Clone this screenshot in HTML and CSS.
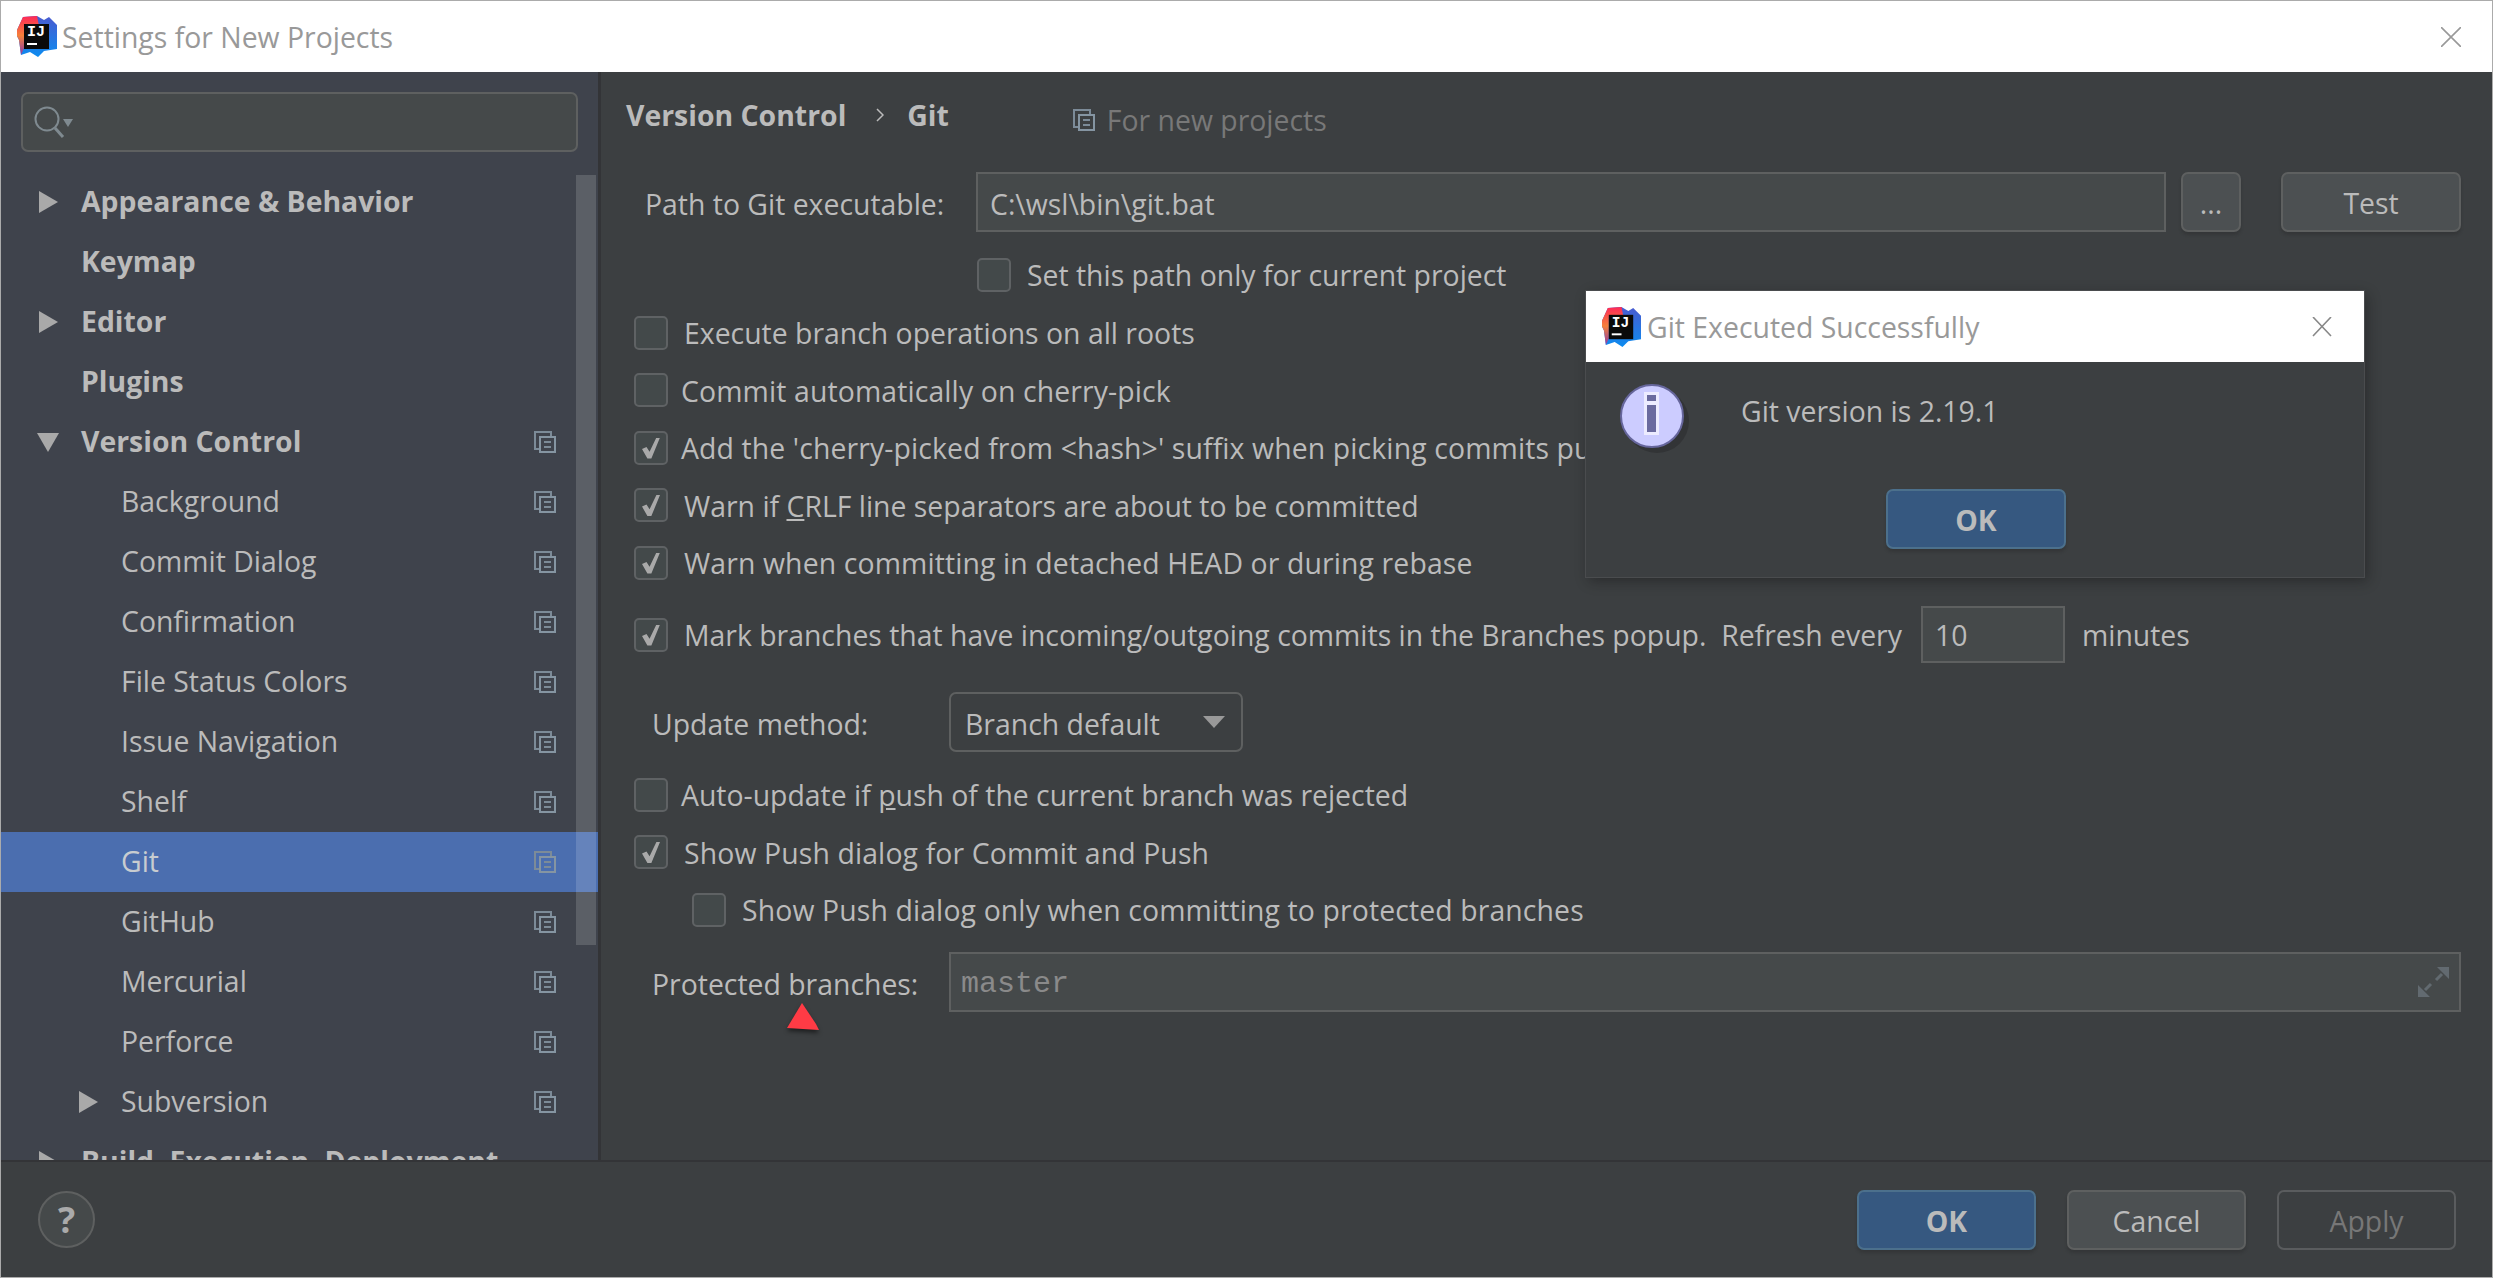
FILE: index.html
```html
<!DOCTYPE html>
<html lang="en">
<head>
<meta charset="utf-8">
<title>Settings for New Projects</title>
<link rel="stylesheet" href="styles.css">
</head>
<body>
<svg class="defs" width="0" height="0" aria-hidden="true">
  <defs>
    <linearGradient id="g-blue" x1="0" y1="0" x2="0" y2="1"><stop offset="0" stop-color="#4a5bd0"/><stop offset="1" stop-color="#0c8cf0"/></linearGradient>
    <linearGradient id="g-left" x1="0" y1="0" x2="0" y2="1"><stop offset="0" stop-color="#fe2857"/><stop offset=".5" stop-color="#f5803a"/><stop offset="1" stop-color="#8a3aa8"/></linearGradient>
    <symbol id="logo" viewBox="0 0 40 41">
      <path d="M0 14 6 1 20 0 27 4 32 1 40 9 40 33 27 35 21 41 13 36 4 39 2 24 0 20Z" fill="url(#g-blue)"/>
      <path d="M0 14 6 1 20 0 22 10 7 10 7 32 4 39 2 24 0 20Z" fill="url(#g-left)"/>
      <rect x="7" y="8" width="25" height="25" fill="#0a0a0a"/>
      <text x="10" y="20" class="logo-text">IJ</text>
      <rect x="10" y="27" width="10" height="2" fill="#fff"/>
    </symbol>
    <symbol id="copy" viewBox="0 0 22 22">
      <path d="M1 1H17V6H6V18H1Z" fill="none" stroke="#7c8b98" stroke-width="2"/>
      <rect x="6" y="6" width="15" height="15" fill="none" stroke="#8595a2" stroke-width="2"/>
      <path d="M10 11H17M10 16H17" stroke="#7c8b98" stroke-width="2"/>
    </symbol>
  </defs>
</svg>

<div class="window">
  <header class="titlebar">
    <svg class="logo"><use href="#logo"/></svg>
    <span class="title-text">Settings for New Projects</span>
    <svg class="close" viewBox="0 0 20 20"><path d="M0 0 20 20M20 0 0 20"/></svg>
  </header>

  <div class="content">
    <aside class="sidebar">
      <div class="search">
        <svg class="search-icon" viewBox="0 0 40 34">
          <circle cx="13" cy="14" r="11.500" fill="none" stroke="#7f8a90" stroke-width="2"/>
          <path d="M21 23 29 32" stroke="#7f8a90" stroke-width="3"/>
          <path d="M29 14H39L34 22Z" fill="#7f8a90"/>
        </svg>
      </div>
      <div class="tree-wrap">
        <ul class="tree">
          <li class="node top"><i class="arrow right"></i><span>Appearance &amp; Behavior</span></li>
          <li class="node top"><span>Keymap</span></li>
          <li class="node top"><i class="arrow right"></i><span>Editor</span></li>
          <li class="node top"><span>Plugins</span></li>
          <li class="node top"><i class="arrow down"></i><span>Version Control</span><svg class="copy"><use href="#copy"/></svg></li>
          <li class="node sub"><span>Background</span><svg class="copy"><use href="#copy"/></svg></li>
          <li class="node sub"><span>Commit Dialog</span><svg class="copy"><use href="#copy"/></svg></li>
          <li class="node sub"><span>Confirmation</span><svg class="copy"><use href="#copy"/></svg></li>
          <li class="node sub"><span>File Status Colors</span><svg class="copy"><use href="#copy"/></svg></li>
          <li class="node sub"><span>Issue Navigation</span><svg class="copy"><use href="#copy"/></svg></li>
          <li class="node sub"><span>Shelf</span><svg class="copy"><use href="#copy"/></svg></li>
          <li class="node sub selected"><span>Git</span><svg class="copy"><use href="#copy"/></svg></li>
          <li class="node sub"><span>GitHub</span><svg class="copy"><use href="#copy"/></svg></li>
          <li class="node sub"><span>Mercurial</span><svg class="copy"><use href="#copy"/></svg></li>
          <li class="node sub"><span>Perforce</span><svg class="copy"><use href="#copy"/></svg></li>
          <li class="node sub"><i class="arrow right"></i><span>Subversion</span><svg class="copy"><use href="#copy"/></svg></li>
          <li class="node top"><i class="arrow right"></i><span>Build, Execution, Deployment</span></li>
        </ul>
        <div class="scrollbar"></div>
      </div>
    </aside>

    <main class="main">
      <div class="crumbs">
        <b>Version Control</b>
        <svg class="chevron" viewBox="0 0 8 14"><path d="M1 1 7 7 1 13"/></svg>
        <b>Git</b>
        <svg class="copy crumb-copy"><use href="#copy"/></svg>
        <span class="for-new">For new projects</span>
      </div>

      <div class="path-row">
        <label class="path-label">Path to Git executable:</label>
        <div class="field path-field">C:\wsl\bin\git.bat</div>
        <button class="btn dots">...</button>
        <button class="btn test">Test</button>
      </div>

      <div class="check set-path"><i class="box"></i><span>Set this path only for current project</span></div>

      <div class="check first"><i class="box"></i><span>Execute branch operations on all roots</span></div>
      <div class="check narrow loose"><i class="box"></i><span>Commit automatically on cherry-pick</span></div>
      <div class="check narrow loose"><i class="box on"></i><span>Add the 'cherry-picked from &lt;hash&gt;' suffix when picking commits pushed to protected branches</span></div>
      <div class="check"><i class="box on"></i><span>Warn if <u>C</u>RLF line separators are about to be committed</span></div>
      <div class="check loose"><i class="box on"></i><span>Warn when committing in detached HEAD or during rebase</span></div>

      <div class="check mark-row"><i class="box on"></i><span>Mark branches that have incoming/outgoing commits in the Branches popup.&nbsp; Refresh every</span><div class="field refresh">10</div><span>minutes</span></div>

      <div class="update-row">
        <label class="form-label">Update method:</label>
        <div class="combo"><span>Branch default</span><i class="combo-arrow"></i></div>
      </div>

      <div class="check narrow auto"><i class="box"></i><span>Auto-update if <u>p</u>ush of the current branch was rejected</span></div>
      <div class="check loose"><i class="box on"></i><span>Show Push dialog for Commit and Push</span></div>
      <div class="check indented loose"><i class="box"></i><span>Show Push dialog only when committing to protected branches</span></div>

      <div class="protected-row">
        <label class="form-label">Protected branches:</label>
        <div class="field protected">
          <span class="mono">master</span>
          <svg class="expand" viewBox="0 0 31 30"><path d="M19 0H31V12Z M0 30V18L12 30Z" fill="#626a70"/><path d="M24 7 18 13M7 23 13 17" stroke="#626a70" stroke-width="3"/></svg>
        </div>
      </div>
    </main>
  </div>

  <footer class="footer">
    <button class="help">?</button>
    <div class="actions">
      <button class="btn primary">OK</button>
      <button class="btn">Cancel</button>
      <button class="btn ghost">Apply</button>
    </div>
  </footer>
</div>

<svg class="cursor" viewBox="0 0 34 30"><path d="M16 1 1 26 33 28 30 22 Z"/></svg>

<section class="dialog">
  <header class="dialog-title">
    <svg class="dialog-logo"><use href="#logo"/></svg>
    <span class="dialog-title-text">Git Executed Successfully</span>
    <svg class="dialog-close" viewBox="0 0 20 20"><path d="M1 0 19 19M19 0 1 19"/></svg>
  </header>
  <div class="dialog-body">
    <svg class="info" viewBox="0 0 70 70">
      <circle cx="35" cy="35" r="32" fill="#1f2022" opacity=".35" transform="translate(3 3)"/>
      <circle cx="33" cy="33" r="31" fill="#ccccff" stroke="#66669c" stroke-width="2"/>
      <rect x="25" y="9" width="15" height="43" fill="#ecebff"/>
      <rect x="28" y="12" width="9" height="6" fill="#6a6a9f"/>
      <rect x="28" y="22" width="9" height="27" fill="#6a6a9f"/>
    </svg>
    <p class="dialog-msg">Git version is 2.19.1</p>
  </div>
  <div class="dialog-actions"><button class="btn primary">OK</button></div>
</section>
</body>
</html>
```

FILE: styles.css
```css
* { box-sizing: border-box; }
html, body { margin: 0; height: 100%; overflow: hidden; }
body {
  position: relative;
  font-family: "Open Sans", "Noto Sans", sans-serif;
  font-size: 28.4px;
  color: #bbbbbb;
  background: #3c3f41;
}
.defs { position: absolute; }
.logo-text { font: 700 15px "Liberation Mono", monospace; fill: #fff; }

.window {
  height: 1278px;
  display: flex;
  flex-direction: column;
  border: 1px solid #ababab;
}

.titlebar {
  height: 71px;
  flex: none;
  background: #fff;
  display: flex;
  align-items: center;
  padding-left: 16px;
}
.logo { width: 40px; height: 41px; margin-right: 5px; }
.title-text { color: #999; line-height: 1; padding-top: 2px; }
.close { width: 20px; height: 20px; margin-left: auto; margin-right: 31px; fill: none; stroke: #999; stroke-width: 1.6; }

.content { height: 1088px; flex: none; display: flex; }

.sidebar {
  width: 600px;
  flex: none;
  background: #3f434c;
  border-right: 3px solid #333437;
  display: flex;
  flex-direction: column;
  padding-top: 20px;
  overflow: hidden;
}
.search {
  width: 557px;
  height: 60px;
  flex: none;
  margin-left: 20px;
  background: #45494a;
  border: 2px solid #5e6060;
  border-radius: 7px;
  display: flex;
  align-items: center;
  padding-left: 11px;
}
.search-icon { width: 40px; height: 34px; }

.tree-wrap { flex: 1; min-height: 0; margin-top: 20px; position: relative; overflow: hidden; }
.tree { list-style: none; margin: 0; padding: 0; }
.node {
  height: 60px;
  position: relative;
  display: flex;
  align-items: center;
  white-space: nowrap;
}
.node span { padding-bottom: 2px; }
.node.top { padding-left: 80px; font-weight: 700; }
.node.sub { padding-left: 120px; }
.node.selected { background: #4b6eaf; color: #c8ccd0; }
.scrollbar {
  position: absolute;
  left: 575px;
  top: 3px;
  width: 20px;
  height: 770px;
  background: rgba(255, 255, 255, .15);
}
.arrow { position: absolute; width: 0; height: 0; }
.arrow.right {
  left: 38px;
  border-top: 11px solid transparent;
  border-bottom: 11px solid transparent;
  border-left: 19px solid #a9a9a9;
}
.node.sub .arrow.right { left: 78px; }
.arrow.down {
  left: 36px;
  border-left: 11px solid transparent;
  border-right: 11px solid transparent;
  border-top: 19px solid #a9a9a9;
}
.copy { width: 22px; height: 22px; flex: none; }
.node .copy { position: absolute; left: 533px; top: 19px; }

.main { flex: 1; min-width: 0; padding-left: 33px; position: relative; }

.crumbs { height: 44px; margin: 21px 0 0 -8px; display: flex; align-items: center; white-space: nowrap; }
.crumbs b { font-weight: 700; }
.chevron { width: 8px; height: 14px; margin: 0 23px 0 30px; fill: none; stroke: #bbb; stroke-width: 1.5; }
.crumb-copy { margin-left: 124px; margin-top: 10px; }
.for-new { color: #787878; margin-left: 12px; margin-top: 10px; }

.path-row { display: flex; align-items: center; margin-top: 35px; height: 60px; padding-left: 11px; }
.path-label { width: 331px; flex: none; white-space: nowrap; padding-top: 3px; }
.field {
  background: #45494a;
  border: 2px solid #5e6060;
  display: flex;
  align-items: center;
  height: 60px;
}
.path-field { width: 1190px; padding: 3px 0 0 12px; }

.btn {
  width: 180px;
  height: 60px;
  font: inherit;
  color: #bbb;
  background: #4c5052;
  border: 2px solid #5e6060;
  border-radius: 7px;
  box-shadow: 0 3px 3px rgba(30, 30, 30, .25);
  padding: 2px 0 0;
}
.dots { width: 60px; margin-left: 15px; }
.test { margin-left: 40px; }
.btn.primary { background: #365880; border-color: #4c708c; font-weight: 700; }
.btn.ghost { background: transparent; color: #777; border-color: #5a5c5e; box-shadow: none; }

.check {
  display: flex;
  align-items: center;
  gap: 16px;
  height: 35px;
  margin-top: 22.5px;
  white-space: nowrap;
}
.check > span { padding-top: 1px; }
.check.narrow { gap: 13px; }
.check.loose { letter-spacing: .12px; }
.box {
  width: 34px;
  height: 34px;
  flex: none;
  border: 2px solid #5f6264;
  border-radius: 5px;
  background: #43494a;
  position: relative;
  display: block;
}
.box.on::after {
  content: "";
  position: absolute;
  left: 6px;
  top: 5px;
  width: 18px;
  height: 21px;
  background: #a9a9a9;
  clip-path: polygon(0 55%, 25% 45%, 42% 68%, 80% 0, 100% 0, 52% 100%, 30% 100%);
}
.set-path { margin-top: 25px; margin-left: 343px; }
.first { margin-top: 23px; }
.mark-row { height: 57px; margin-top: 26px; }
.refresh { width: 144px; height: 57px; padding-left: 12px; margin: 0 1px 0 3px; background: #45494a; }
.update-row { display: flex; align-items: center; height: 60px; margin-top: 29px; padding-left: 18px; }
.form-label { width: 297px; flex: none; white-space: nowrap; padding-top: 3px; }
.combo {
  width: 294px;
  height: 60px;
  border: 2px solid #5e6060;
  border-radius: 7px;
  display: flex;
  align-items: center;
  padding: 3px 0 0 14px;
}
.combo-arrow {
  margin-left: auto;
  margin-right: 16px;
  margin-top: -3px;
  width: 0;
  height: 0;
  border-left: 11px solid transparent;
  border-right: 11px solid transparent;
  border-top: 12px solid #999;
}
.auto { margin-top: 25px; }
.indented { margin-left: 58px; letter-spacing: .16px; }
.protected-row { display: flex; align-items: center; height: 60px; margin-top: 25px; padding-left: 18px; }
.protected { width: 1512px; padding-left: 10px; }
.mono { font: 30px "Liberation Mono", monospace; color: #8a8a8a; padding-top: 3px; }
.expand { width: 31px; height: 30px; margin-left: auto; margin-right: 10px; }

.footer {
  flex: 1;
  border-top: 2px solid #333437;
  display: flex;
  align-items: center;
  padding: 0 36px 0 37px;
}
.help {
  width: 57px;
  height: 57px;
  border-radius: 50%;
  background: #45494a;
  border: 2px solid #5e6060;
  color: #aaa;
  font: 700 36px "Open Sans", sans-serif;
  padding: 0;
}
.actions { margin-left: auto; display: flex; gap: 31px; }
.actions .btn { width: 179px; }

.cursor { position: absolute; left: 786px; top: 1002px; width: 34px; height: 30px; fill: #ff3b45; filter: drop-shadow(0 3px 2px rgba(0, 0, 0, .5)); }

.dialog {
  position: absolute;
  left: 1586px;
  top: 291px;
  width: 778px;
  height: 286px;
  background: #3c3f41;
  box-shadow: 0 0 0 1px #4a4c4e, 3px 4px 12px rgba(20, 20, 20, .45);
}
.dialog-title { height: 71px; background: #fff; display: flex; align-items: center; padding-left: 16px; }
.dialog-logo { width: 39px; height: 40px; margin-right: 6px; }
.dialog-title-text { color: #999; }
.dialog-close { width: 20px; height: 20px; margin-left: auto; margin-right: 32px; fill: none; stroke: #888; stroke-width: 1.6; }
.dialog-body { display: flex; align-items: flex-start; padding: 21px 0 0 33px; height: 127px; }
.info { width: 70px; height: 70px; flex: none; }
.dialog-msg { margin: 9px 0 0 52px; }
.dialog-actions { display: flex; justify-content: center; padding-left: 2px; }
```
